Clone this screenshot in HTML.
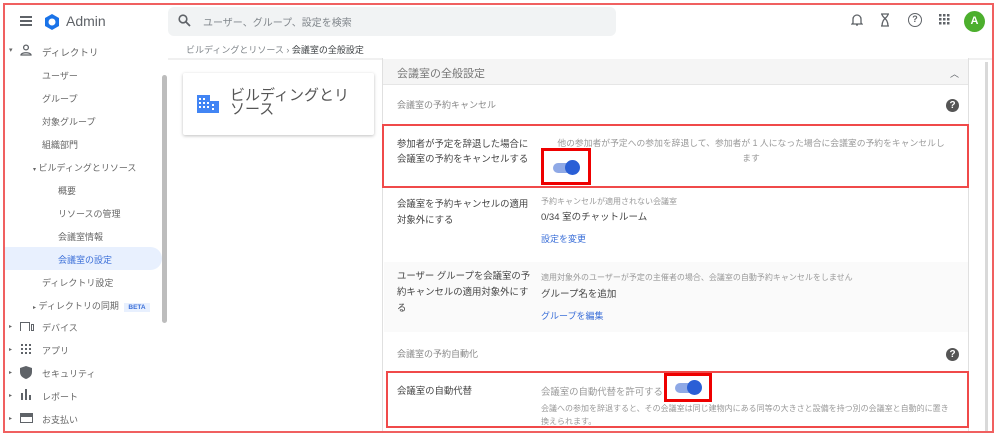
<!DOCTYPE html><html><head><meta charset="utf-8"><style>
*{box-sizing:border-box;margin:0;padding:0}
body{width:1000px;height:438px;overflow:hidden;background:#fff;font-family:"Liberation Sans","Noto Sans CJK JP",sans-serif;color:#444;position:relative}
.a{position:absolute;white-space:nowrap}
.s{font-size:9px;color:#666}
.red{position:absolute;border:2px solid #f04a4a}
.tg{position:absolute;width:24px;height:10px;border-radius:5px;background:#8fa9e6}
.tg:after{content:"";position:absolute;right:-3px;top:-3px;width:15px;height:15px;border-radius:50%;background:#2a5fd6}
.help{position:absolute;width:13px;height:13px;border-radius:50%;background:#555;color:#fff;font-size:10px;font-weight:bold;text-align:center;line-height:13px}
.lk{color:#3b6fd8;font-size:9px}
</style></head><body>
<div class="a" style="left:20px;top:16px;width:12px;height:2px;background:#5f6368;box-shadow:0 4px #5f6368,0 8px #5f6368"></div>
<svg class="a" style="left:43px;top:13px" width="18" height="18" viewBox="0 0 18 18"><polygon points="9,1 16,5 16,13 9,17 2,13 2,5" fill="#1a73e8"/><circle cx="9" cy="9" r="3.5" fill="#fff"/></svg>
<div class="a" style="left:66px;top:13px;font-size:14px;color:#5f6368">Admin</div>
<div class="a" style="left:168px;top:7px;width:448px;height:29px;background:#f1f3f4;border-radius:6px"></div>
<svg class="a" style="left:178px;top:14px" width="13" height="13" viewBox="0 0 13 13"><circle cx="5" cy="5" r="3.8" stroke="#5f6368" stroke-width="1.6" fill="none"/><path d="M8 8l4 4" stroke="#5f6368" stroke-width="1.8"/></svg>
<div class="a" style="left:203px;top:14px;font-size:10px;color:#80868b">ユーザー、グループ、設定を検索</div>
<svg class="a" style="left:851px;top:13px" width="12" height="14" viewBox="0 0 12 14"><path d="M2 10V6a4 4 0 018 0v4l1 1H1z M5 12h2" stroke="#5f6368" stroke-width="1.3" fill="none"/></svg>
<svg class="a" style="left:880px;top:13px" width="10" height="14" viewBox="0 0 10 14"><path d="M1 1h8M1 13h8M2 1c0 4 6 4 6 12M8 1c0 4-6 4-6 12" stroke="#5f6368" stroke-width="1.3" fill="none"/></svg>
<div class="a" style="left:908px;top:13px;width:14px;height:14px;border:1.5px solid #5f6368;border-radius:50%;font-size:9px;text-align:center;line-height:11px;color:#5f6368;font-weight:bold">?</div>
<svg class="a" style="left:939px;top:14px" width="11" height="11"><g fill="#5f6368"><rect x="0" y="0" width="2.5" height="2.5"/><rect x="4" y="0" width="2.5" height="2.5"/><rect x="8" y="0" width="2.5" height="2.5"/><rect x="0" y="4" width="2.5" height="2.5"/><rect x="4" y="4" width="2.5" height="2.5"/><rect x="8" y="4" width="2.5" height="2.5"/><rect x="0" y="8" width="2.5" height="2.5"/><rect x="4" y="8" width="2.5" height="2.5"/><rect x="8" y="8" width="2.5" height="2.5"/></g></svg>
<div class="a" style="left:964px;top:11px;width:21px;height:21px;border-radius:50%;background:#4caf2d;color:#fff;font-size:11px;text-align:center;line-height:21px;font-weight:bold">A</div>
<div class="a" style="left:168px;top:58px;width:825px;height:2px;background:#f0f0f0"></div>
<div class="a" style="left:186px;top:43px;font-size:9px;color:#80868b">ビルディングとリソース › <span style="color:#3c4043">会議室の全般設定</span></div>
<div class="a" style="left:4px;top:247px;width:158px;height:23px;background:#e8f0fe;border-radius:0 12px 12px 0"></div>
<div class="a" style="left:162px;top:75px;width:5px;height:248px;background:#bdbdbd;border-radius:3px"></div>
<div class="a s" style="left:9px;top:46px;font-size:7px">▾</div>
<svg class="a" style="left:20px;top:44px" width="12" height="12" viewBox="0 0 12 12"><circle cx="6" cy="3.5" r="2.4" stroke="#5f6368" stroke-width="1.3" fill="none"/><path d="M1 11c0-3 10-3 10 0z" stroke="#5f6368" stroke-width="1.3" fill="none"/></svg>
<div class="a s" style="left:42px;top:45px;font-size:9.5px">ディレクトリ</div>
<div class="a s" style="left:42px;top:69px">ユーザー</div>
<div class="a s" style="left:42px;top:92px">グループ</div>
<div class="a s" style="left:42px;top:115px">対象グループ</div>
<div class="a s" style="left:42px;top:138px">組織部門</div>
<div class="a s" style="left:33px;top:161px"><span style="font-size:6px">▾</span> ビルディングとリソース</div>
<div class="a s" style="left:58px;top:184px">概要</div>
<div class="a s" style="left:58px;top:207px">リソースの管理</div>
<div class="a s" style="left:58px;top:230px">会議室情報</div>
<div class="a s" style="left:58px;top:253px;color:#3b6fd8">会議室の設定</div>
<div class="a s" style="left:42px;top:276px">ディレクトリ設定</div>
<div class="a s" style="left:33px;top:299px"><span style="font-size:6px">▸</span> ディレクトリの同期 <span style="background:#e8f0fe;color:#3b6fd8;font-size:6.5px;font-weight:bold;padding:1px 4px;margin-left:3px">BETA</span></div>
<div class="a s" style="left:9px;top:323px;font-size:6px">▸</div><div class="a" style="left:20px;top:322px;width:10px;height:9px;border:1.5px solid #5f6368;border-bottom:none"></div><div class="a" style="left:31px;top:324px;width:3px;height:7px;border:1.5px solid #5f6368"></div><div class="a s" style="left:42px;top:321px">デバイス</div>
<div class="a s" style="left:9px;top:346px;font-size:6px">▸</div><svg class="a" style="left:21px;top:344px" width="10" height="10"><g fill="#5f6368"><rect x="0" y="0" width="2" height="2"/><rect x="4" y="0" width="2" height="2"/><rect x="8" y="0" width="2" height="2"/><rect x="0" y="4" width="2" height="2"/><rect x="4" y="4" width="2" height="2"/><rect x="8" y="4" width="2" height="2"/><rect x="0" y="8" width="2" height="2"/><rect x="4" y="8" width="2" height="2"/><rect x="8" y="8" width="2" height="2"/></g></svg><div class="a s" style="left:42px;top:344px">アプリ</div>
<div class="a s" style="left:9px;top:369px;font-size:6px">▸</div><svg class="a" style="left:20px;top:366px" width="12" height="13"><path d="M6 0L12 2v4c0 4-3 6-6 7C3 12 0 10 0 6V2z" fill="#5f6368"/></svg><div class="a s" style="left:42px;top:367px">セキュリティ</div>
<div class="a s" style="left:9px;top:392px;font-size:6px">▸</div><svg class="a" style="left:21px;top:389px" width="11" height="11"><g fill="#5f6368"><rect x="0" y="4" width="2" height="7"/><rect x="4" y="0" width="2" height="11"/><rect x="8" y="6" width="2" height="5"/></g></svg><div class="a s" style="left:42px;top:390px">レポート</div>
<div class="a s" style="left:9px;top:415px;font-size:6px">▸</div><div class="a" style="left:20px;top:413px;width:13px;height:10px;border:1.5px solid #5f6368;border-top-width:4px"></div><div class="a s" style="left:42px;top:413px">お支払い</div>
<div class="a" style="left:183px;top:73px;width:191px;height:62px;background:#fff;box-shadow:0 1px 3px rgba(0,0,0,.25);border-radius:2px"></div>
<svg class="a" style="left:197px;top:95px" width="22" height="18"><rect x="0" y="0" width="13" height="18" fill="#4285f4"/><rect x="13" y="6" width="9" height="12" fill="#4285f4"/><g fill="#fff"><rect x="2" y="3" width="2" height="2"/><rect x="6" y="3" width="2" height="2"/><rect x="2" y="7" width="2" height="2"/><rect x="6" y="7" width="2" height="2"/><rect x="10" y="7" width="2" height="2"/><rect x="2" y="11" width="2" height="2"/><rect x="6" y="11" width="2" height="2"/><rect x="10" y="11" width="2" height="2"/><rect x="15" y="9" width="2" height="2"/><rect x="15" y="13" width="2" height="2"/></g></svg>
<div class="a" style="left:230px;top:89px;font-size:15px;line-height:14px;color:#555;white-space:normal;width:140px">ビルディングとリ<br>ソース</div>
<div class="a" style="left:382px;top:58px;width:587px;height:374px;border-left:1px solid #e0e0e0;border-right:1px solid #e0e0e0;background:#fff"></div>
<div class="a" style="left:383px;top:59px;width:585px;height:26px;background:#f5f5f5;border-bottom:1px solid #e6e6e6"></div>
<div class="a" style="left:397px;top:65px;font-size:11px;color:#777">会議室の全般設定</div>
<div class="a" style="left:950px;top:67px;font-size:9px;color:#5f6368">︿</div>
<div class="a" style="left:985px;top:62px;width:3px;height:370px;background:#d9d9d9"></div>
<div class="a s" style="left:397px;top:98px;color:#888">会議室の予約キャンセル</div>
<div class="help" style="left:946px;top:99px">?</div>
<div class="a" style="left:397px;top:136px;font-size:9.4px;line-height:15px;color:#444">参加者が予定を辞退した場合に<br>会議室の予約をキャンセルする</div>
<div class="a" style="left:543px;top:136px;font-size:8.8px;line-height:15px;color:#999;text-align:center;width:416px">他の参加者が予定への参加を辞退して、参加者が 1 人になった場合に会議室の予約をキャンセルし<br>ます</div>
<div class="tg" style="left:553px;top:163px"></div>
<div class="red" style="left:382px;top:124px;width:587px;height:64px"></div>
<div class="red" style="left:541px;top:148px;width:50px;height:37px;border-width:3px;border-color:#e00"></div>
<div class="a" style="left:397px;top:196px;font-size:9.4px;line-height:16px">会議室を予約キャンセルの適用<br>対象外にする</div>
<div class="a" style="left:541px;top:196px;font-size:8px;color:#999">予約キャンセルが適用されない会議室</div>
<div class="a" style="left:541px;top:209px;font-size:9.5px">0/34 室のチャットルーム</div>
<div class="a lk" style="left:541px;top:232px">設定を変更</div>
<div class="a" style="left:384px;top:262px;width:584px;height:70px;background:#fafafa"></div>
<div class="a" style="left:397px;top:268px;font-size:9.4px;line-height:16px">ユーザー グループを会議室の予<br>約キャンセルの適用対象外にす<br>る</div>
<div class="a" style="left:541px;top:272px;font-size:8px;color:#999">適用対象外のユーザーが予定の主催者の場合、会議室の自動予約キャンセルをしません</div>
<div class="a" style="left:541px;top:286px;font-size:9.5px">グループ名を追加</div>
<div class="a lk" style="left:541px;top:309px">グループを編集</div>
<div class="a s" style="left:397px;top:347px;color:#888">会議室の予約自動化</div>
<div class="help" style="left:946px;top:348px">?</div>
<div class="a" style="left:397px;top:383px;font-size:9.4px">会議室の自動代替</div>
<div class="a" style="left:541px;top:384px;font-size:9.4px;color:#999">会議室の自動代替を許可する</div>
<div class="tg" style="left:675px;top:383px"></div>
<div class="a" style="left:541px;top:402px;font-size:8px;line-height:13px;color:#999">会議への参加を辞退すると、その会議室は同じ建物内にある同等の大きさと設備を持つ別の会議室と自動的に置き<br>換えられます。</div>
<div class="red" style="left:386px;top:371px;width:583px;height:57px"></div>
<div class="red" style="left:664px;top:373px;width:48px;height:29px;border-width:3px;border-color:#e00"></div>
<div class="red" style="left:3px;top:3px;width:991px;height:430px;border-color:#f06060"></div>
</body></html>
